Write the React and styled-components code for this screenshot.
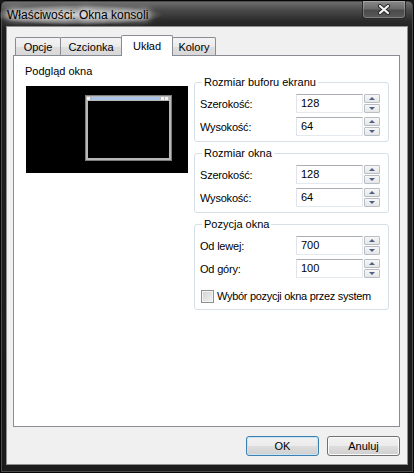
import React from 'react';
import styled, { createGlobalStyle } from 'styled-components';

const GlobalStyle = createGlobalStyle`
    html, body {
        margin: 0;
        padding: 0;
        background: #1b1b1b;
    }
    body {
        font-family: "Liberation Sans", Arial, sans-serif;
        font-size: 11px;
        color: #000;
    }
    * {
        box-sizing: border-box;
    }
`;

const tabs = [
    { label: 'Opcje', width: 46 },
    { label: 'Czcionka', width: 62 },
    { label: 'Układ', width: 52, active: true },
    { label: 'Kolory', width: 44 },
];

const groups = [
    {
        title: 'Rozmiar buforu ekranu',
        rows: [
            { label: 'Szerokość:', value: '128' },
            { label: 'Wysokość:', value: '64' },
        ],
    },
    {
        title: 'Rozmiar okna',
        rows: [
            { label: 'Szerokość:', value: '128' },
            { label: 'Wysokość:', value: '64' },
        ],
    },
    {
        title: 'Pozycja okna',
        rows: [
            { label: 'Od lewej:', value: '700' },
            { label: 'Od góry:', value: '100' },
        ],
        checkbox: 'Wybór pozycji okna przez system',
    },
];

const CloseIcon = () => (
    <svg width='14' height='11' viewBox='0 0 14 11'>
        <path d='M3 2 L11 9 M11 2 L3 9' stroke='#2b2b2b' strokeWidth='4.2' strokeLinecap='round' />
        <path d='M3 2 L11 9 M11 2 L3 9' stroke='#f4f4f4' strokeWidth='2.2' strokeLinecap='round' />
    </svg>
);

// miniature of the console window inside the preview
const MiniWindow = () => (
    <svg width='87' height='66' viewBox='0 0 87 66'>
        <rect x='0' y='0' width='87' height='66' fill='#7c7c7c' />
        <rect x='1' y='1' width='85' height='64' fill='#b8b8b8' />
        <rect x='3' y='6' width='81' height='57' fill='#000' />
        <rect x='2' y='2' width='3' height='3' fill='#f4f4f4' />
        <rect x='7' y='2' width='68' height='3' fill='#a9c4e4' />
        <rect x='76' y='2' width='3' height='3' fill='#f4f4f4' />
        <rect x='80' y='2' width='3' height='3' fill='#f4f4f4' />
    </svg>
);

const App = () => {
    return (
        <>
            <GlobalStyle />
            <Window>
                <TitleBar>
                    <TitleText>Właściwości: Okna konsoli</TitleText>
                    <CloseButton>
                        <CloseIcon />
                    </CloseButton>
                </TitleBar>
                <Client>
                    <TabStrip>
                        {tabs.map((t) => (
                            <Tab key={t.label} $width={t.width} $active={t.active}>
                                {t.label}
                            </Tab>
                        ))}
                    </TabStrip>
                    <Panel>
                        <PreviewColumn>
                            <PreviewLabel>Podgląd okna</PreviewLabel>
                            <PreviewBox>
                                <MiniWindowSpot>
                                    <MiniWindow />
                                </MiniWindowSpot>
                            </PreviewBox>
                        </PreviewColumn>
                        <GroupColumn>
                            {groups.map((g) => (
                                <Group key={g.title}>
                                    <Legend>{g.title}</Legend>
                                    {g.rows.map((r, i) => (
                                        <Row key={r.label} $first={i === 0}>
                                            <Label>{r.label}</Label>
                                            <SpinBox>
                                                <TextBox>{r.value}</TextBox>
                                                <Spinner>
                                                    <SpinButton />
                                                    <SpinButton $down />
                                                </Spinner>
                                            </SpinBox>
                                        </Row>
                                    ))}
                                    {g.checkbox ? (
                                        <CheckRow>
                                            <CheckBox />
                                            <span>{g.checkbox}</span>
                                        </CheckRow>
                                    ) : null}
                                </Group>
                            ))}
                        </GroupColumn>
                    </Panel>
                    <Footer>
                        <Button $default>OK</Button>
                        <Button>Anuluj</Button>
                    </Footer>
                </Client>
            </Window>
        </>
    );
};

export default App;

const Window = styled.div`
    width: 414px;
    height: 473px;
    display: flex;
    flex-direction: column;
    padding: 0 5px 7px;
    border: 1px solid #060606;
    border-radius: 6px 6px 0 0;
    background: linear-gradient(
        to bottom,
        #727272 0,
        #4a4a4a 9px,
        #2a2a2a 20px,
        #1e1e1e 30px,
        #1c1c1c 100%
    );
    box-shadow: inset 0 0 0 1px #4a4a4a;
`;

const TitleBar = styled.div`
    height: 25px;
    display: flex;
    justify-content: space-between;
    padding-left: 1px;
`;

const TitleText = styled.div`
    align-self: center;
    margin: 2px 0 0 -14px;
    padding: 3px 14px;
    font-size: 12px;
    color: #000;
    background: radial-gradient(
        ellipse at center,
        rgba(235, 235, 235, 0.75) 0,
        rgba(200, 200, 200, 0.35) 55%,
        rgba(160, 160, 160, 0) 72%
    );
    text-shadow: 0 0 6px #fff, 0 0 8px #fff, 0 0 12px rgba(255, 255, 255, 0.9);
`;

const CloseButton = styled.div`
    width: 44px;
    height: 18px;
    margin-right: 2px;
    display: flex;
    align-items: center;
    justify-content: center;
    border: 1px solid #2a2a2a;
    border-top: none;
    border-radius: 0 0 4px 4px;
    background: linear-gradient(to bottom, #8a8a8a 0, #6a6a6a 45%, #4b4b4b 55%, #5a5a5a 100%);
    box-shadow: inset 0 0 0 1px rgba(255, 255, 255, 0.22);
`;

const Client = styled.div`
    flex: 1;
    display: flex;
    flex-direction: column;
    background: #f0f0f0;
    border: 1px solid #8f8f8f;
    padding: 8px 7px 0 6px;
`;

const TabStrip = styled.div`
    display: flex;
    align-items: flex-end;
    height: 21px;
    padding-left: 2px;
    margin-bottom: -1px;
    position: relative;
    z-index: 1;
`;

const Tab = styled.div`
    width: ${(p) => p.$width}px;
    height: ${(p) => (p.$active ? 21 : 18)}px;
    margin-bottom: ${(p) => (p.$active ? 0 : 1)}px;
    display: flex;
    align-items: center;
    justify-content: center;
    padding-top: ${(p) => (p.$active ? 0 : 1)}px;
    border: 1px solid #898c95;
    border-bottom: none;
    border-radius: 2px 2px 0 0;
    background: ${(p) =>
        p.$active
            ? '#fff'
            : 'linear-gradient(to bottom, #f3f3f3 0, #ebebeb 50%, #dedede 51%, #d8d8d8 100%)'};

    & + & {
        margin-left: -1px;
    }
`;

const Panel = styled.div`
    height: 372px;
    display: grid;
    grid-template-columns: 163px 195px;
    column-gap: 6px;
    align-items: start;
    padding: 8px 10px 0 11px;
    background: #fff;
    border: 1px solid #898c95;
`;

const PreviewColumn = styled.div`
    display: flex;
    flex-direction: column;
`;

const PreviewLabel = styled.div`
    line-height: 14px;
`;

const PreviewBox = styled.div`
    position: relative;
    width: 162px;
    height: 87px;
    margin: 8px 0 0 1px;
    background: #000;
`;

const MiniWindowSpot = styled.div`
    position: absolute;
    left: 59px;
    top: 9px;
    line-height: 0;
`;

const GroupColumn = styled.div`
    display: flex;
    flex-direction: column;
    gap: 4px;
    margin-top: 11px;
`;

const Group = styled.fieldset`
    margin: 0;
    min-width: 0;
    padding: 0 7px 3px 5px;
    border: 1px solid #d5dfe5;
    border-radius: 3px;
`;

const Legend = styled.legend`
    margin-left: 2px;
    padding: 0 2px;
    line-height: 14px;
`;

const Row = styled.div`
    height: 23px;
    margin-top: ${(p) => (p.$first ? 3 : 0)}px;
    display: flex;
    align-items: center;
`;

const Label = styled.div`
    width: 96px;
    letter-spacing: -0.2px;
`;

const SpinBox = styled.div`
    display: flex;
    height: 19px;
`;

const TextBox = styled.div`
    width: 67px;
    height: 19px;
    line-height: 17px;
    padding-left: 4px;
    background: #fff;
    border: 1px solid;
    border-color: #abadb3 #e3e9ef #e3e9ef #e2e3ea;
`;

const Spinner = styled.div`
    width: 17px;
    display: flex;
    flex-direction: column;
    gap: 1px;
    padding: 0 0 0 1px;
`;

const SpinButton = styled.div`
    flex: 1;
    display: flex;
    align-items: center;
    justify-content: center;
    border: 1px solid #b9bec4;
    border-radius: 1px;
    background: linear-gradient(to bottom, #f7f7f7 0, #e6e6e6 100%);

    &::after {
        content: '';
        border-left: 3.5px solid transparent;
        border-right: 3.5px solid transparent;
        ${(p) => (p.$down ? 'border-top: 3px solid #4d6185;' : 'border-bottom: 3px solid #4d6185;')}
    }
`;

const CheckRow = styled.div`
    height: 20px;
    margin-top: 6px;
    display: flex;
    align-items: center;
    letter-spacing: -0.3px;
`;

const CheckBox = styled.div`
    width: 13px;
    height: 13px;
    margin: 0 3px 0 1px;
    border: 1px solid #8e8f8f;
    background: linear-gradient(135deg, #cfd1d4 0, #f2f2f2 100%);
    box-shadow: inset 0 0 0 1px #f4f4f4;
`;

const Footer = styled.div`
    display: flex;
    justify-content: flex-end;
    gap: 8px;
    padding-top: 9px;
`;

const Button = styled.div`
    width: 73px;
    height: 20px;
    display: flex;
    align-items: center;
    justify-content: center;
    border: 1px solid ${(p) => (p.$default ? '#3c7fb1' : '#707070')};
    border-radius: 3px;
    background: linear-gradient(to bottom, #f2f2f2 0, #ebebeb 50%, #dddddd 51%, #cfcfcf 100%);
    box-shadow: inset 0 0 0 1px ${(p) => (p.$default ? '#c7e5f7' : '#fcfcfc')};
`;
